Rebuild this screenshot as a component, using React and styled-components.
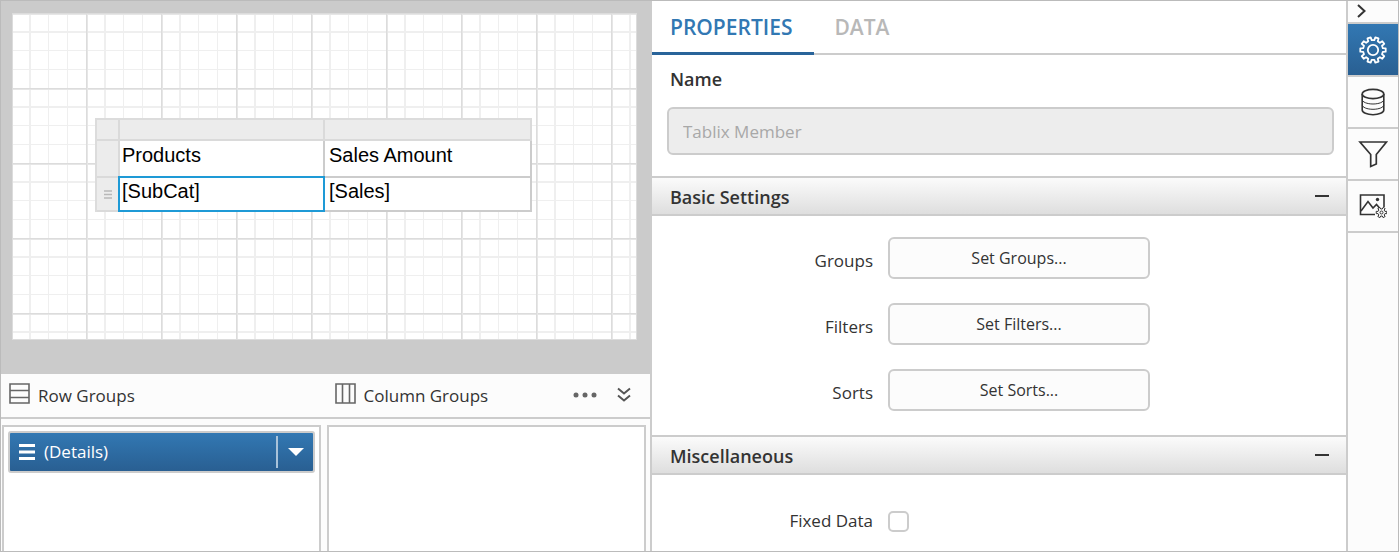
import React, { useState } from "react";
import styled, { createGlobalStyle } from "styled-components";

const GlobalStyle = createGlobalStyle`
  *, *::before, *::after { box-sizing: border-box; }
  body {
    margin: 0;
    background: #fff;
    color: #333;
    font: 17px/24px "Open Sans", "Noto Sans", sans-serif;
  }
  button, input { font: inherit; color: inherit; margin: 0; }
  button { padding: 0; border: 0; background: none; cursor: pointer; }
`;

const line = "#cccccc";
const blue = "linear-gradient(#3278b3, #295f92)";

const Designer = styled.div`
  display: grid;
  grid-template-columns: minmax(0, 651fr) minmax(0, 694fr) 52px;
  min-height: 100vh;
  border: 1px solid #bbb;
`;

/* ---- Report surface ---- */

const Workspace = styled.main`
  display: flex;
  flex-direction: column;
  border-right: 2px solid ${line};
`;

const Canvas = styled.section`
  padding: 12px 13px 34px 11px;
  background: #cbcbcb;
`;

const gridLines = (dir) => `
  linear-gradient(${dir},
    transparent 18px, #efefef 18px 20px, transparent 20px 37px,
    #efefef 37px 38px, transparent 38px 56px, #efefef 56px 57px,
    transparent 57px)`;

const majorLines = (dir) => `
  linear-gradient(${dir}, #dcdcdc 1px, #e6e6e6 1px 2px, transparent 2px)`;

const Surface = styled.div`
  min-height: 327px;
  padding: 104px 0 0 82px;
  border: 1px solid #dcdcdc;
  background-color: #fff;
  background-image: ${majorLines("to right")}, ${majorLines("to bottom")},
    ${gridLines("to right")}, ${gridLines("to bottom")};
  background-size: 75px 75px;
  background-position: -2px -1px;
`;

const Tablix = styled.table`
  width: 437px;
  table-layout: fixed;
  border-spacing: 0;
  border: 2px solid #dcdcdc;
  border-width: 2px 0 0 2px;
  font: 20px/24px "Liberation Sans", Arial, sans-serif;
  color: #000;
`;

const Handle = styled.td`
  width: ${(p) => p.$width || "auto"};
  height: ${(p) => p.$height || "auto"};
  padding: 0;
  border: 2px solid #dadada;
  border-width: 0 2px 2px 0;
  background: #ececec;
  text-align: center;
  svg { display: block; margin: 0 auto; }
`;

const Cell = styled.td`
  position: relative;
  height: ${(p) => p.$height};
  padding: ${(p) => p.$pad} 0 0 ${(p) => (p.$first ? "2px" : "4px")};
  border: 2px solid ${line};
  border-width: 0 2px 2px 0;
  background: #fff;
  vertical-align: top;
  &::after {
    content: "";
    display: ${(p) => (p.$selected ? "block" : "none")};
    position: absolute;
    inset: -2px;
    border: 2px solid #1e9ad6;
  }
`;

/* ---- Grouping panel ---- */

const GroupBar = styled.header`
  display: flex;
  align-items: center;
  height: 45px;
  padding: 0 18px 2px 8px;
  border-bottom: 2px solid ${line};
  background: #fcfcfc;
`;

const GroupTitle = styled.h2`
  display: flex;
  align-items: center;
  gap: 8px;
  flex: ${(p) => (p.$grow ? "1 1 0" : "0 0 calc(50% + 14px)")};
  margin: 0;
  padding-top: 2px;
  font-size: 17px;
  font-weight: 400;
  svg { margin-bottom: 4px; }
`;

const BarButton = styled.button`
  display: flex;
  margin-left: 19px;
`;

const GroupLists = styled.div`
  display: grid;
  grid-template-columns: 1fr 1fr;
  gap: 6px;
  flex: 1;
  padding: 6px 4px 0 1px;
  background: #fcfcfc;
`;

const GroupList = styled.div`
  padding: 4px 4px 0;
  border: 2px solid ${line};
  border-bottom: 0;
  background: #fff;
`;

const GroupItem = styled.div`
  display: flex;
  align-items: center;
  height: 42px;
  padding-left: 9px;
  border: 2px solid ${line};
  border-radius: 3px;
  background: ${blue};
  color: #fff;
`;

const GroupName = styled.span`
  flex: 1;
  padding-left: 9px;
`;

const GroupMenu = styled.button`
  display: flex;
  align-items: center;
  justify-content: center;
  width: 37px;
  height: 32px;
  border-left: 2px solid #a9c3da;
`;

/* ---- Property panel ---- */

const Panel = styled.aside`
  background: #fff;
`;

const Tabs = styled.div`
  display: flex;
  height: 54px;
  box-shadow: inset 0 -2px ${line};
`;

const Tab = styled.button`
  padding: ${(p) => (p.$active ? "0 22px 0 18px" : "0 20px")};
  border-bottom: 3px solid ${(p) => (p.$active ? "#29649a" : "transparent")};
  color: ${(p) => (p.$active ? "#3278b3" : "#b8b8b8")};
  font-size: 21px;
  font-weight: 600;
`;

const NameField = styled.div`
  display: flex;
  flex-direction: column;
  gap: 16px;
  padding: 12px 12px 21px 15px;
  label { padding-left: 3px; font-size: 18px; font-weight: 600; }
`;

const TextInput = styled.input`
  width: 100%;
  height: 48px;
  padding: 0 14px;
  border: 2px solid ${line};
  border-radius: 6px;
  background: #ededed;
  &::placeholder { color: #a8a8a8; opacity: 1; }
`;

const SectionHeader = styled.button`
  display: flex;
  align-items: center;
  justify-content: space-between;
  width: 100%;
  height: 40px;
  padding: 2px 17px 0 18px;
  border: 2px solid ${line};
  border-width: 2px 0;
  background: linear-gradient(#fbfbfb, #dedede);
  font-size: 18px;
  font-weight: 600;
  svg { margin-bottom: 2px; }
`;

const SectionBody = styled.div`
  display: grid;
  grid-template-columns: 221px 262px;
  column-gap: 15px;
  row-gap: 24px;
  align-items: center;
  padding: ${(p) => p.$pad};
`;

const FieldLabel = styled.label`
  padding-top: ${(p) => (p.$low ? "5px" : "0")};
  text-align: right;
`;

const ActionButton = styled.button`
  height: 42px;
  border: 2px solid ${line};
  border-radius: 6px;
  background: #fcfcfc;
  font-size: 16px;
`;

const CheckBox = styled.input`
  appearance: none;
  width: 21px;
  height: 21px;
  border: 2px solid ${line};
  border-radius: 5px;
  background: #fff;
  &:checked { background: #3278b3; }
`;

/* ---- Side toolbar ---- */

const Toolbar = styled.nav`
  display: flex;
  flex-direction: column;
  border-left: 2px solid ${line};
  background: #fcfcfc;
`;

const ToolButton = styled.button`
  display: flex;
  align-items: center;
  justify-content: ${(p) => (p.$short ? "flex-start" : "center")};
  height: ${(p) => (p.$short ? "23px" : p.$active ? "53px" : "52px")};
  padding: ${(p) => (p.$short ? "0 0 2px 8px" : "0 1px 0 0")};
  border-bottom: 2px solid ${line};
  background: ${(p) => (p.$active ? blue : "transparent")};
  background-clip: padding-box;
  color: ${(p) => (p.$active ? "#fff" : "#333")};
`;

/* ---- Drawings ---- */

const Icon = ({ w, h, children, ...rest }) => (
  <svg width={w} height={h} viewBox={`0 0 ${w} ${h}`} fill="none" stroke="currentColor" aria-hidden="true" {...rest}>
    {children}
  </svg>
);

// Outline of a cog; each tooth is a trapezoid between the root and tip circles.
function cogPath(cx, cy, teeth, root, tip) {
  const step = (2 * Math.PI) / teeth;
  const points = [];
  for (let i = 0; i < teeth; i++) {
    const mid = -Math.PI / 2 + step * (i + 0.5);
    [[-0.29, root], [-0.21, tip], [0.21, tip], [0.29, root]].forEach(([f, r]) => {
      const a = mid + f * step;
      points.push(`${(cx + r * Math.cos(a)).toFixed(2)} ${(cy + r * Math.sin(a)).toFixed(2)}`);
    });
  }
  return `M${points.join("L")}Z`;
}

const GearIcon = () => (
  <Icon w={28} h={28} strokeWidth="1.8" strokeLinejoin="round">
    <path d={cogPath(14, 14, 10, 10, 12.8)} />
    <circle cx="14" cy="14" r="5.2" />
  </Icon>
);

const DatabaseIcon = () => (
  <Icon w={24} h={28} strokeWidth="1.6">
    <ellipse cx="12" cy="6" rx="10.8" ry="4.6" />
    <path d="M1.2 6v16c0 2.6 4.8 4.7 10.8 4.7s10.8-2.1 10.8-4.7V6" />
    <path strokeWidth="1" d="M1.2 11.5c0 2.5 4.8 4.5 10.8 4.5s10.8-2 10.8-4.500M1.2 16.800c0 2.500 4.800 4.500 10.800 4.500s10.800-2 10.800-4.500" />
  </Icon>
);

const FilterIcon = () => (
  <Icon w={30} h={28} strokeWidth="1.7">
    <path d="M2 2h26.500L18.300 14.500v9.500L12.700 26.500V14.500z" />
  </Icon>
);

const ImageIcon = () => (
  <Icon w={28} h={26} strokeWidth="1.6">
    <path d="M16 21.500H1.500V2H25V14" />
    <path d="M2 18L9 8.500l5 6.500 3.500-3.500 3 3.500" />
    <circle cx="18.500" cy="6.500" r="1.700" fill="currentColor" stroke="none" />
    <path strokeWidth="1" d={cogPath(22.5, 19.5, 6, 3.6, 5.4)} />
    <circle cx="22.500" cy="19.500" r="1.500" strokeWidth="1" />
  </Icon>
);

const CollapseMark = () => (
  <Icon w={14} h={2} stroke="none" fill="#333">
    <path d="M0 0h14v2H0z" />
  </Icon>
);

const settings = ["Groups", "Filters", "Sorts"];

export default function App() {
  const [fixed, setFixed] = useState(false);
  return (
    <Designer>
      <GlobalStyle />
      <Workspace>
        <Canvas>
          <Surface>
            <Tablix>
              <tbody>
                <tr>
                  <Handle $width="23px" $height="21px" />
                  <Handle $width="205px" />
                  <Handle />
                </tr>
                <tr>
                  <Handle />
                  <Cell $height="37px" $pad="2px" $first>Products</Cell>
                  <Cell $pad="2px">Sales Amount</Cell>
                </tr>
                <tr>
                  <Handle>
                    <Icon w={10} h={9} stroke="#b8b8b8" strokeWidth="1.500">
                      <path d="M1 1h8M1 4.500h8M1 8h8" />
                    </Icon>
                  </Handle>
                  <Cell $height="34px" $pad="1px" $first $selected>[SubCat]</Cell>
                  <Cell $pad="1px">[Sales]</Cell>
                </tr>
              </tbody>
            </Tablix>
          </Surface>
        </Canvas>

        <GroupBar>
          <GroupTitle>
            <Icon w={21} h={21} stroke="#666" strokeWidth="1.600">
              <path d="M1 1h19v19H1zM1 7.500h19M1 14.500h19" />
            </Icon>
            Row Groups
          </GroupTitle>
          <GroupTitle $grow>
            <Icon w={21} h={21} stroke="#666" strokeWidth="1.600">
              <path d="M1 1h19v19H1zM7.500 1v19M14.500 1v19" />
            </Icon>
            Column Groups
          </GroupTitle>
          <BarButton aria-label="More options">
            <Icon w={24} h={6} stroke="none" fill="#666">
              <circle cx="3" cy="3" r="2.500" />
              <circle cx="12" cy="3" r="2.500" />
              <circle cx="21" cy="3" r="2.500" />
            </Icon>
          </BarButton>
          <BarButton aria-label="Collapse grouping panel">
            <Icon w={16} h={16} stroke="#555" strokeWidth="2">
              <path d="M2 1.500l6 5 6-5M2 8.500l6 5 6-5" />
            </Icon>
          </BarButton>
        </GroupBar>
        <GroupLists>
          <GroupList>
            <GroupItem>
              <Icon w={16} h={16} strokeWidth="3">
                <path d="M0 1.500h16M0 8h16M0 14.500h16" />
              </Icon>
              <GroupName>(Details)</GroupName>
              <GroupMenu aria-label="Group menu">
                <Icon w={16} h={8} stroke="none" fill="#fff">
                  <path d="M0 0h16L8 8z" />
                </Icon>
              </GroupMenu>
            </GroupItem>
          </GroupList>
          <GroupList />
        </GroupLists>
      </Workspace>

      <Panel>
        <Tabs role="tablist">
          <Tab role="tab" aria-selected="true" $active>PROPERTIES</Tab>
          <Tab role="tab" aria-selected="false">DATA</Tab>
        </Tabs>
        <NameField>
          <label htmlFor="member-name">Name</label>
          <TextInput id="member-name" placeholder="Tablix Member" disabled />
        </NameField>

        <SectionHeader aria-expanded="true">
          Basic Settings
          <CollapseMark />
        </SectionHeader>
        <SectionBody $pad="21px 0 24px">
          {settings.map((name) => (
            <React.Fragment key={name}>
              <FieldLabel $low htmlFor={`set-${name}`}>{name}</FieldLabel>
              <ActionButton id={`set-${name}`}>Set {name}...</ActionButton>
            </React.Fragment>
          ))}
        </SectionBody>

        <SectionHeader aria-expanded="true">
          Miscellaneous
          <CollapseMark />
        </SectionHeader>
        <SectionBody $pad="34px 0 16px">
          <FieldLabel htmlFor="fixed-data">Fixed Data</FieldLabel>
          <CheckBox id="fixed-data" type="checkbox" checked={fixed} onChange={(e) => setFixed(e.target.checked)} />
        </SectionBody>
      </Panel>

      <Toolbar aria-label="Panels">
        <ToolButton $short aria-label="Collapse panel">
          <Icon w={12} h={16} strokeWidth="2"><path d="M2 2l6.500 6L2 14" /></Icon>
        </ToolButton>
        <ToolButton $active aria-label="Properties"><GearIcon /></ToolButton>
        <ToolButton aria-label="Data"><DatabaseIcon /></ToolButton>
        <ToolButton aria-label="Filters"><FilterIcon /></ToolButton>
        <ToolButton aria-label="Image manager"><ImageIcon /></ToolButton>
      </Toolbar>
    </Designer>
  );
}
